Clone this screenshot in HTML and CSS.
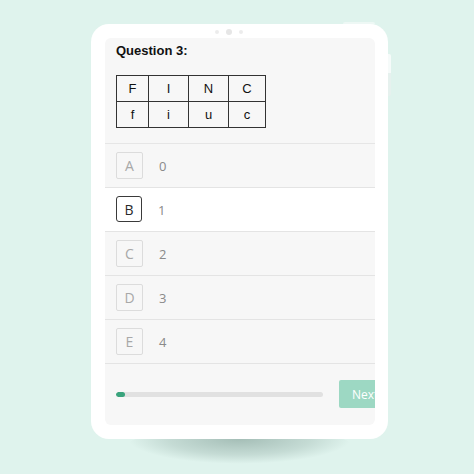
FILE: index.html
```html
<!DOCTYPE html>
<html>
<head>
<meta charset="utf-8">
<link rel="stylesheet" href="styles.css">
</head>
<body>
<div class="tablet">
  <span class="btn-top"></span>
  <span class="btn-side"></span>
  <div class="camera">
    <span class="dot"></span><span class="dot big"></span><span class="dot"></span>
  </div>
  <div class="screen">
    <div class="question">
      <h1 class="title">Question 3:</h1>
      <table class="grid">
        <tr><td class="c1">F</td><td class="c2">I</td><td class="c3">N</td><td class="c4">C</td></tr>
        <tr><td class="c1">f</td><td class="c2">i</td><td class="c3">u</td><td class="c4">c</td></tr>
      </table>
    </div>
    <ul class="options">
      <li class="option"><span class="letter">A</span><span class="value">0</span></li>
      <li class="option selected"><span class="letter">B</span><span class="value">1</span></li>
      <li class="option"><span class="letter">C</span><span class="value">2</span></li>
      <li class="option"><span class="letter">D</span><span class="value">3</span></li>
      <li class="option"><span class="letter">E</span><span class="value">4</span></li>
    </ul>
    <div class="footer">
      <div class="progress"><div class="fill"></div></div>
      <button class="next">Next</button>
    </div>
  </div>
</div>
</body>
</html>
```
FILE: styles.css
```css
html, body {
  margin: 0;
  padding: 0;
}
body {
  background: #dff3ed;
  width: 474px;
  height: 474px;
  overflow: hidden;
  padding-top: 24px;
  box-sizing: border-box;
}
.tablet {
  position: relative;
  margin-left: 91px;
  width: 297px;
  height: 415px;
  box-sizing: border-box;
  background: #fff;
  border-radius: 18px;
  padding: 0 13px 14px 14px;
  display: flex;
  flex-direction: column;
}
.tablet::after {
  content: "";
  position: absolute;
  left: 36px;
  right: 36px;
  top: 404px;
  height: 36px;
  border-radius: 50%;
  background: radial-gradient(ellipse at 50% 30%, rgba(60,95,85,0.36) 0%, rgba(60,95,85,0.16) 45%, rgba(60,95,85,0) 70%);
  z-index: -1;
}
.btn-top {
  position: absolute;
  top: -2px;
  left: 252px;
  width: 32px;
  height: 2px;
  border-radius: 2px 2px 0 0;
  background: #eef8f5;
}
.btn-side {
  position: absolute;
  right: -3px;
  top: 30px;
  width: 3px;
  height: 42px;
  border-radius: 0 2px 2px 0;
  background: linear-gradient(#f6fbfa 0 45%, #e6f1ee 45% 100%);
}
.camera {
  height: 14px;
  display: flex;
  align-items: center;
  gap: 7px;
  padding-left: 110px;
  padding-top: 2px;
  box-sizing: border-box;
}
.dot {
  width: 4px;
  height: 4px;
  border-radius: 50%;
  background: #ececec;
}
.dot.big {
  width: 6px;
  height: 6px;
  background: #e6e6e6;
}
.screen {
  flex: 1;
  background: #f7f7f7;
  border-radius: 6px;
  overflow: hidden;
  display: flex;
  flex-direction: column;
}
.question {
  padding: 5px 11px 0 11px;
  height: 105px;
  box-sizing: border-box;
  flex-shrink: 0;
}
.title {
  margin: 0;
  font-family: "Liberation Sans", Arial, sans-serif;
  font-weight: bold;
  font-size: 13px;
  line-height: 16px;
  color: #111;
}
.grid {
  margin-top: 16px;
  border-collapse: collapse;
  font-family: "Liberation Sans", Arial, sans-serif;
  font-size: 13px;
  color: #111;
}
.grid td {
  border: 1px solid #333;
  height: 25px;
  padding: 0;
  text-align: center;
}
.c1 { width: 31px; }
.c2 { width: 39px; }
.c3 { width: 39px; }
.c4 { width: 36px; }
.options {
  list-style: none;
  margin: 0;
  padding: 0;
  border-top: 1px solid #e6e6e6;
  flex-shrink: 0;
}
.option {
  height: 43px;
  border-bottom: 1px solid #e4e4e4;
  display: flex;
  align-items: center;
  padding-left: 11px;
  font-family: "Open Sans", sans-serif;
}
.option.selected {
  background: #fff;
}
.letter {
  width: 25px;
  height: 25px;
  border: 1px solid #dcdcdc;
  border-radius: 2px;
  display: flex;
  align-items: center;
  justify-content: center;
  font-size: 14px;
  color: #a8a8a8;
  margin-top: -1px;
}
.selected .letter {
  width: 24px;
  height: 24px;
  border: 1.5px solid #3a3a3a;
  border-radius: 3px;
  color: #2a2a2a;
}
.value {
  margin-left: 16px;
  font-size: 13px;
  color: #8a8a8a;
}
.footer {
  flex: 1;
  display: flex;
  align-items: center;
  padding-left: 11px;
  padding-bottom: 1px;
}
.progress {
  flex: 0 0 207px;
  height: 5px;
  border-radius: 3px;
  background: #e1e1e1;
  overflow: hidden;
}
.fill {
  width: 9px;
  height: 100%;
  border-radius: 3px;
  background: #3aa47d;
}
.next {
  flex: 0 0 60px;
  margin-left: 16px;
  height: 28px;
  border: none;
  border-radius: 2px;
  background: #9dd8c3;
  color: #fff;
  font-family: "Open Sans", sans-serif;
  font-size: 12px;
  text-align: left;
  padding: 0 0 0 13px;
}
```
